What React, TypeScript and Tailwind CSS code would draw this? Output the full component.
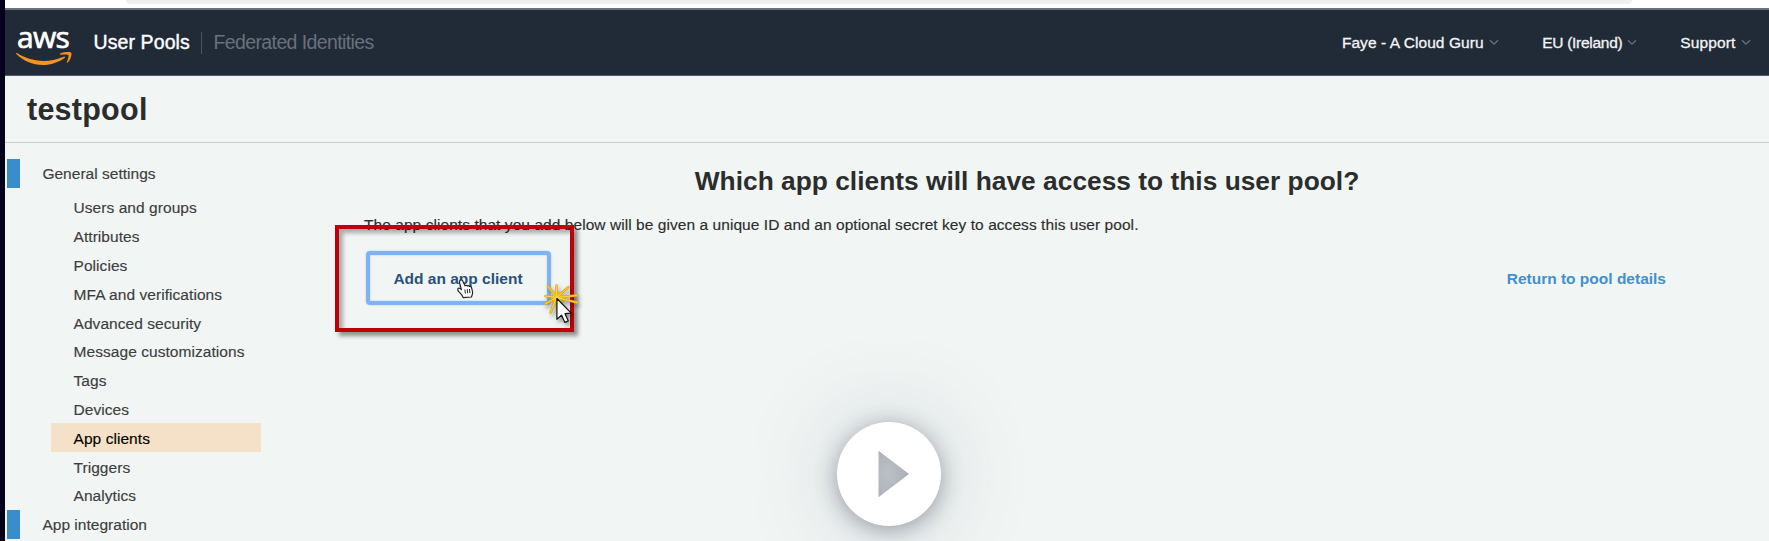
import type { ReactNode } from "react";

const poolLinks = [
  "Users and groups",
  "Attributes",
  "Policies",
  "MFA and verifications",
  "Advanced security",
  "Message customizations",
  "Tags",
  "Devices",
  "App clients",
  "Triggers",
  "Analytics",
];

const burstRays = [
  "M14.500 14.500 6 3",
  "M14.500 14.500 14.500 2.500",
  "M14.500 14.500 26.500 4",
  "M14.500 14.500 34.500 12.500",
  "M14.500 14.500 35 19.500",
  "M14.500 14.500 3.500 13",
  "M14.500 14.500 3 21",
  "M14.500 14.500 8.500 29.500",
];

function AwsLogo() {
  return (
    <div className="flex w-[56px] flex-col items-center">
      <span className="mt-[3px] -ml-[2px] h-[27px] font-['Open_Sans',sans-serif] text-[30px] leading-[27px] font-medium tracking-[-0.700px] text-white [-webkit-text-stroke:0.700px_white]">
        aws
      </span>
      <svg width="56" height="14" viewBox="0 0 56 14" className="mt-[2px] block" fill="#f79320">
        <path d="M.9 1.100C.1.600-.3 1.300.4 2 7 8.700 16.500 12.900 27 12.900c8 0 15.500-2.700 21.600-7 .9-.7.2-1.700-.9-1.200C41 7.500 34 8.900 27.400 8.900 17.500 8.900 8.400 5.800.9 1.100Z" />
        <path d="M44.300 1.600C47.500-.4 54.300-.4 55.200.7c.9 1.200-.3 7.200-3.600 9.900-.5.4-1 .2-.8-.4.9-2.100 2.300-6.300 1.600-7.200-.7-.9-5-.6-7.600-.3-.8.100-1.200-.6-.5-1.100Z" />
      </svg>
    </div>
  );
}

function MenuItem({ className, children }: { className: string; children: ReactNode }) {
  return (
    <button className="flex items-center gap-[5px]">
      <span className={className}>{children}</span>
      <svg width="10" height="7" viewBox="0 0 10 7" fill="none" stroke="#69717b" strokeWidth="1.300">
        <path d="M1 1.200 5 5.200 9 1.200" />
      </svg>
    </button>
  );
}

function SectionHeading({ children }: { children: ReactNode }) {
  return (
    <div className="flex h-[28.8px] items-center">
      <span className="ml-[2.400px] h-full w-[13px] bg-[#3a8dcb]" />
      <span className="ml-[22px] text-[15.500px] tracking-[0.020px] text-[#3c3e3e] [-webkit-text-stroke:0.150px_#3c3e3e]">{children}</span>
    </div>
  );
}

function Annotation() {
  return (
    <>
      <div className="absolute top-[225px] left-[335px] h-[107px] w-[239px] border-4 border-[#c00009] shadow-[4px_4px_4px_rgba(0,0,0,0.4),inset_4px_4px_4px_rgba(0,0,0,0.3)]" />
      <svg className="absolute top-[278px] left-[456px]" width="20" height="21" viewBox="0 0 20 21" fill="#fff" stroke="#222" strokeWidth="1.200" strokeLinejoin="round">
        <path d="M4.200 2.300c.8-.8 2-.5 2.500.6L9 7.800c.4-.7 1.700-.8 2.200.2.500-.6 1.800-.5 2.200.5.700-.5 1.700-.1 2 .8.700 2.300 1.700 4.600 1 6.800l-1 2.900-8.200.6c-.7-2.600-2.500-4-4.200-5.700C1.800 12.700 1.300 11 2.300 10.300c1-.6 2 .1 3.100 1.300L3.500 4.600c-.2-.9 0-1.700.7-2.300Z" />
        <path d="m8.800 11.500.6 4M11.200 11.200l.5 4M13.500 11l.4 4" fill="none" strokeWidth="1" />
      </svg>
      <svg className="absolute top-[283px] left-[542px] drop-shadow-[2px_3px_2px_rgba(0,0,0,0.4)]" width="38" height="44" viewBox="0 0 38 44">
        <g stroke="#e3a70c" strokeWidth="2.600" strokeLinecap="round">
          {burstRays.map((ray) => (
            <path key={ray} d={ray} />
          ))}
        </g>
        <circle cx="15" cy="14" r="5.500" fill="#e9b416" />
        <g stroke="#f9d94c" strokeWidth="1" strokeLinecap="round">
          {burstRays.map((ray) => (
            <path key={ray} d={ray} />
          ))}
        </g>
        <path d="M14.900 15.500v20.800l4.600-4.200 3.400 7.300 3.400-1.500-3.300-7.200 6.200-.5Z" fill="#fff" stroke="#111" strokeWidth="1.200" strokeLinejoin="round" />
      </svg>
    </>
  );
}

function PlayButton() {
  return (
    <button
      aria-label="Play"
      className="absolute top-[422px] left-[837px] flex size-[104px] items-center justify-center rounded-full bg-white shadow-[0_4px_22px_rgba(60,68,90,0.45),0_0_90px_rgba(90,105,120,0.25)]"
    >
      <svg width="32" height="48" viewBox="0 0 32 48" className="ml-[10px]">
        <defs>
          <radialGradient id="tri" cx="0.300" cy="0.500" r="0.700">
            <stop offset="0" stopColor="#bcc0c6" />
            <stop offset="1" stopColor="#a9adb6" />
          </radialGradient>
        </defs>
        <path d="M.5.800 31 24 .5 47.200Z" fill="url(#tri)" />
      </svg>
    </button>
  );
}

export default function App() {
  return (
    <div className="relative flex h-[541px] w-[1769px] overflow-hidden bg-[#f1f5f4] font-['Liberation_Sans',Arial,sans-serif] text-[#2b2d2d]">
      <div className="w-[5px] shrink-0 bg-[#04001c]" />
      <div className="flex min-w-0 flex-1 flex-col">
        <div className="h-[8px] shrink-0 bg-white pr-[137px] pl-[121px]">
          <div className="h-[4px] rounded-b-[10px] bg-[#efefef]" />
        </div>

        <header className="flex h-[68px] shrink-0 items-center border-t-2 border-b border-t-[#6b737c] border-b-[#545d68] bg-[#212a37] pr-[18.500px] pl-[11px]">
          <AwsLogo />
          <span className="ml-[21.500px] text-[19.500px] tracking-[0.100px] whitespace-nowrap text-white [-webkit-text-stroke:0.4px_white]">User Pools</span>
          <span className="ml-[11px] h-[22px] w-px bg-[#4b535d]" />
          <span className="ml-[11.500px] text-[19.500px] tracking-[-0.600px] whitespace-nowrap text-[#69717b]">Federated Identities</span>
          <nav className="ml-auto flex items-center text-[15.500px] whitespace-nowrap text-[#f4f5f5] [-webkit-text-stroke:0.3px_#f4f5f5]">
            <MenuItem className="tracking-[0.070px]">Faye - A Cloud Guru</MenuItem>
            <span className="w-[43.500px]" />
            <MenuItem className="tracking-[-0.280px]">EU (Ireland)</MenuItem>
            <span className="w-[43px]" />
            <MenuItem className="tracking-[0.120px]">Support</MenuItem>
          </nav>
        </header>

        <div className="flex h-[67px] shrink-0 items-center border-b border-[#c8cccb] pl-[22px]">
          <h1 className="text-[30.500px] leading-none font-bold tracking-[0.250px]">testpool</h1>
        </div>

        <div className="flex flex-1">
          <aside className="w-[301px] shrink-0 pt-[16px]">
            <SectionHeading>General settings</SectionHeading>
            <ul className="mt-[5.300px] ml-[46px] w-[210px] text-[15.500px] tracking-[0.060px]">
              {poolLinks.map((label) => (
                <li
                  key={label}
                  className={
                    label === "App clients"
                      ? "flex h-[28.8px] items-center bg-[#f5e0c8] pt-px pl-[22.500px] text-black [-webkit-text-stroke:0.150px_black]"
                      : "flex h-[28.8px] items-center pt-px pl-[22.500px] text-[#3c3e3e] [-webkit-text-stroke:0.150px_#3c3e3e]"
                  }
                >
                  {label}
                </li>
              ))}
            </ul>
            <SectionHeading>App integration</SectionHeading>
          </aside>

          <main className="w-[1442px] pt-[22px] pl-[58px]">
            <h2 className="w-[1326px] text-center text-[26.300px] leading-[32px] font-bold tracking-[0.020px] whitespace-nowrap">
              Which app clients will have access to this user pool?
            </h2>
            <p className="mt-[18px] text-[15.500px] leading-[20px] tracking-[0.060px] whitespace-nowrap [-webkit-text-stroke:0.150px_#2b2d2d]">
              The app clients that you add below will be given a unique ID and an optional secret key to access this user pool.
            </p>
            <div className="mt-[16px] flex w-[1302px] items-center justify-between text-[15.500px] font-bold">
              <button className="ml-[1.500px] h-[54px] w-[185px] rounded-[4px] border-4 border-[#7fb3f0] pt-[2px] text-[#28517d] shadow-[0_0_2px_#a9cdf6,inset_0_0_2px_#a9cdf6]">
                Add an app client
              </button>
              <a className="pt-[2px] text-[#4091cc]">Return to pool details</a>
            </div>
          </main>
        </div>
      </div>
      <Annotation />
      <PlayButton />
    </div>
  );
}
